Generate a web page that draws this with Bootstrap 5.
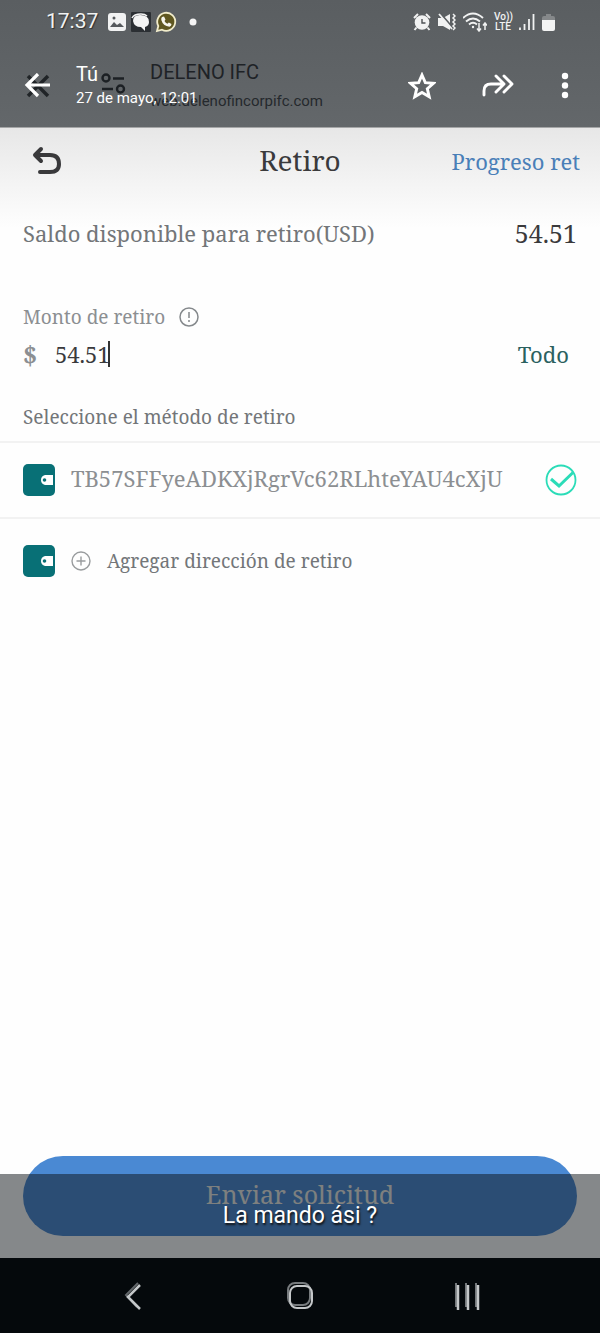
<!DOCTYPE html>
<html lang="es">
<head>
<meta charset="utf-8">
<meta name="viewport" content="width=device-width, initial-scale=1">
<title>Retiro</title>
<link rel="stylesheet" href="https://cdn.jsdelivr.net/npm/bootstrap@5.3.0/dist/css/bootstrap.min.css">
<style>
  body { font-family: "Noto Serif", "DejaVu Serif Condensed", "DejaVu Serif", serif; color: #3a3a3c; background: #fefefe; line-height: 1.4; }
  button { color: inherit; }
  svg { display: block; flex: none; }
  .plain { border: 0; background: none; padding: 0; }
  .viewer { font-family: Roboto, sans-serif; background: linear-gradient(#5a5e61, #63676a); color: #fff; border-bottom: 1px solid #a5a6a7; height: 128px; }
  .status { height: 44px; padding: 0 45px 0 46px; color: #f1f2f2; }
  .status-icons { gap: 7px; }
  .clock { font-size: 21px; width: 53px; text-shadow: 1px 1px 1px #2d3033; }
  .volte { font-size: 10px; line-height: 10px; width: 18px; font-weight: 500; }
  .titlebar { height: 83px; padding: 0 20px 0 24px; }
  .from { font-size: 20px; line-height: 24px; }
  .when { font-size: 15px; line-height: 24px; }
  .site { left: 101px; top: 60px; color: #1e2226; font-size: 20px; line-height: 24px; }
  .site svg { margin-top: 12px; }
  .site a { color: #25292d; font-size: 15px; line-height: 34px; display: block; text-decoration: none; }
  .forward { margin: 0 36px 0 46px; }
  .app { background: linear-gradient(#e7e7e7, #fefefe 100px); }
  .toolbar { height: 66px; padding: 0 20px; }
  .back { margin-left: 12px; }
  .pagetitle { font-size: 28px; }
  .t-lg { font-size: 25px; }
  .t-md { font-size: 22px; }
  .t-sm { font-size: 19px; }
  .progress-link { color: #4a7fb8; text-decoration: none; }
  .ink-gray { color: #737679; }
  .ink-light { color: #8c8f92; }
  .ink-teal { color: #2b615f; }
  .gutter { padding-left: 23px; padding-right: 23px; }
  .balance { height: 78px; }
  .amount-label { margin-top: 31px; height: 28px; gap: 14px; }
  .amount { height: 46px; }
  .amount input { width: 55px; border: 0; border-right: 2px solid #333; padding: 0; outline: 0; background: none; color: #3a3a3c; height: 26px; }
  .currency { width: 32px; }
  .choose { height: 48px; margin-top: 16px; }
  .method { height: 76px; border-top: 2px solid #f2f2f2; }
  .method-add { height: 86px; }
  .address { padding-bottom: 4px; }
  .check { appearance: none; margin: 0; width: 32px; height: 32px; flex: none;
    background: url("data:image/svg+xml,%3Csvg xmlns='http://www.w3.org/2000/svg' viewBox='0 0 32 32' fill='none' stroke='%232bdcb8'%3E%3Ccircle cx='16' cy='16' r='14.5' stroke-width='1.8'/%3E%3Cpath d='M6 15l8 7L28 8.500' stroke-width='3'/%3E%3C/svg%3E"); }
  .send-area { padding-bottom: 22px; }
  .send { height: 80px; border-radius: 40px; background: #4a89d3; color: #f0efe8; padding-bottom: 4px; }
  .caption { height: 84px; background: rgba(12, 18, 22, .5); color: #fff; font: 23px/84px Roboto, sans-serif; text-shadow: 1px 2px 2px #111; bottom: 0; }
  .keys { height: 75px; background: #05090c; padding: 0 50px; }
</style>
</head>
<body>
<div class="d-flex flex-column min-vh-100">
  <header class="viewer position-relative">
    <div class="status d-flex align-items-center">
      <span class="clock">17:37</span>
      <svg class="ms-2" width="20" height="20" viewBox="0 0 20 20"><rect x="1" y="1" width="18" height="18" rx="3" fill="#f1f2f2"/><path d="M3 15l4-5 3 3 3-2 4 4z" fill="#55595c"/><circle cx="7" cy="6" r="1.500" fill="#55595c"/></svg>
      <svg class="ms-1 me-1" width="20" height="20" viewBox="0 0 20 20"><rect width="20" height="20" rx="1" fill="#2b2f33"/><path d="M2 9q0-6 7-6 9 0 9 7 0 4-4 5v4l-4-4Q3 15 2 9z" fill="#f4f4f4"/><path d="M1 6q2-4 9-4 4 0 6 2" stroke="#f4f4f4" stroke-width="1.500" fill="none"/></svg>
      <svg width="22" height="22" viewBox="0 0 22 22"><path d="M2 20l1.300-5A9 9 0 1 1 7 18.700z" fill="#5f5720" stroke="#f1eccb" stroke-width="1.800"/><path d="M7 6l2-.5 1.500 3-1 1.500q1 2 3 2.800l1.300-1.300 2.700 1.500q0 2-2 2.800Q8 15 6.300 9q-.3-2 .7-3z" fill="#f6f5ec"/></svg>
      <svg class="ms-2" width="16" height="8" viewBox="0 0 16 8"><circle cx="8" cy="4" r="3.500" fill="#f4f4f4"/></svg>
      <div class="status-icons ms-auto d-flex align-items-center">
        <svg width="18" height="18" viewBox="0 0 18 18" fill="#f1f2f2"><circle cx="9" cy="9.500" r="7.300"/><path d="M1 5l4-4M17 5l-4-4M3.500 14.500l-2 2.500M14.500 14.500l2 2.500" stroke="#f1f2f2" stroke-width="2"/><path d="M9 6v4h3.500" stroke="#4e5255" stroke-width="1.400" fill="none"/></svg>
        <svg width="18" height="18" viewBox="0 0 18 18" fill="none" stroke="#f1f2f2"><path d="M0 5h5l7-4v16l-7-4H0z" fill="#f1f2f2" stroke="none"/><path d="M2 0l12 14" stroke="#5a5e61" stroke-width="2"/><path d="M1 1l13 15" stroke-width="1.800"/><path d="M15 1l2 2-2 2 2 2-2 2 2 2-2 2 2 2-2 2" stroke-width="1.500"/></svg>
        <svg width="24" height="20" viewBox="0 0 24 20" fill="none" stroke="#f1f2f2" stroke-width="1.900"><path d="M0 6Q10-3 20 6M3 9.500q7-6 14 0M6 12.500q4-3.500 8 0"/><circle cx="10" cy="15" r="1.200" fill="#f1f2f2" stroke="none"/><path d="M16 11v8m-2-2.500l2 2.500 2-2.500M22 18v-7m-2 2.500l2-2.500 2 2.500" stroke-width="1.500"/></svg>
        <span class="volte text-center">Vo))<br>LTE</span>
        <svg width="16" height="18" viewBox="0 0 16 18" stroke="#f1f2f2" stroke-width="1.800"><path d="M1 14.500V17M5.500 11v6M10 6v11M14.500 1v16"/></svg>
        <svg width="13" height="17" viewBox="0 0 13 17"><path d="M0 4q0-2 2-2h2V0h5v2h2q2 0 2 2v4H0z" fill="#85888a"/><path d="M0 6h13v9q0 2-2 2H2q-2 0-2-2z" fill="#f3f4f4"/></svg>
      </div>
    </div>
    <div class="site position-absolute d-flex">
      <svg width="25" height="24" viewBox="0 0 25 24" fill="none" stroke="#1c2024" stroke-width="2.400"><circle cx="5" cy="6" r="3.500"/><path d="M12 6.500h11M1 17h11"/><circle cx="19.500" cy="17" r="3.500"/></svg>
      <div class="ps-4"><span>DELENO IFC</span><a href="#">web.delenofincorpifc.com</a></div>
    </div>
    <div class="titlebar d-flex align-items-center position-relative">
      <button class="plain" type="button" aria-label="Atrás"><svg width="28" height="26" viewBox="0 0 28 26" fill="none"><path d="M4 3l20 20M24 3L4 23" stroke="#202427" stroke-width="3.500"/><path d="M26 12H4M14 1L3 12l11 11" stroke="#fff" stroke-width="3.200"/></svg></button>
      <div class="ms-4"><div class="from">Tú</div><div class="when">27 de mayo, 12:01</div></div>
      <button class="plain ms-auto" type="button" aria-label="Destacar"><svg width="28" height="28" viewBox="0 0 28 28"><path d="M14 3l3.300 7.600 8.200.7-6.200 5.400 1.900 8.100L14 20.500l-7.200 4.300 1.900-8.100-6.200-5.400 8.200-.7z" fill="none" stroke="#fff" stroke-width="2.900"/></svg></button>
      <button class="plain forward" type="button" aria-label="Reenviar"><svg width="32" height="26" viewBox="0 0 32 26" fill="none" stroke="#fff" stroke-width="2.900" stroke-linecap="round" stroke-linejoin="round"><path d="M2 22v-4q0-7 7-7h12M14 3l8 8-8 8M22 3l8 8-8 8"/></svg></button>
      <button class="plain" type="button" aria-label="Más opciones"><svg width="30" height="28" viewBox="0 0 30 28" fill="#fff"><circle cx="15" cy="4" r="3.200"/><circle cx="15" cy="13.500" r="3.200"/><circle cx="15" cy="23" r="3.200"/></svg></button>
    </div>
  </header>

  <main class="app flex-grow-1 d-flex flex-column position-relative">
    <div class="toolbar row g-0 align-items-center">
      <div class="col"><button class="plain back d-block" type="button" aria-label="Volver"><svg width="30" height="30" viewBox="0 0 30 30" fill="none" stroke="#39393b" stroke-width="4" stroke-linecap="round" stroke-linejoin="round"><path d="M9 3L3 9l6 6M4 9h14q9 0 9 9 0 8-9 8H8"/></svg></button></div>
      <h1 class="pagetitle col-auto fw-normal m-0">Retiro</h1>
      <div class="col text-end text-nowrap"><a class="progress-link t-md" href="#">Progreso ret</a></div>
    </div>
    <div class="balance gutter d-flex align-items-center justify-content-between">
      <span class="t-md ink-gray">Saldo disponible para retiro(USD)</span>
      <span class="t-lg">54.51</span>
    </div>
    <div class="amount-label gutter d-flex align-items-center ink-light">
      <label class="t-sm" for="amount">Monto de retiro</label>
      <svg width="20" height="20" viewBox="0 0 20 20" fill="none" stroke="#85898c" stroke-width="1.500"><circle cx="10" cy="10" r="9"/><path d="M10 5v6M10 13v2"/></svg>
    </div>
    <div class="amount gutter d-flex align-items-center">
      <span class="currency t-lg ink-light fw-bold">$</span>
      <input class="t-md" id="amount" type="text" inputmode="decimal" value="54.51">
      <button class="plain t-md ink-teal ms-auto me-2" type="button">Todo</button>
    </div>
    <h2 class="choose gutter d-flex align-items-center t-sm fw-normal ink-gray mb-0">Seleccione el método de retiro</h2>
    <label class="method gutter d-flex align-items-center">
      <svg width="32" height="32" viewBox="0 0 32 32"><rect width="32" height="32" rx="5" fill="#087076"/><path d="M30 11v10h-8q-4-1-4-5t4-5z" fill="#fff"/><circle cx="21.500" cy="16" r="1.800" fill="#087076"/></svg>
      <span class="address t-md ink-light ms-3">TB57SFFyeADKXjRgrVc62RLhteYAU4cXjU</span>
      <input class="check ms-auto" type="radio" name="method" checked>
    </label>
    <button class="method method-add plain gutter d-flex align-items-center text-start" type="button">
      <svg width="32" height="32" viewBox="0 0 32 32"><rect width="32" height="32" rx="5" fill="#087076"/><path d="M30 11v10h-8q-4-1-4-5t4-5z" fill="#fff"/><circle cx="21.500" cy="16" r="1.800" fill="#087076"/></svg>
      <svg class="ms-3" width="20" height="20" viewBox="0 0 20 20" fill="none" stroke="#999c9e" stroke-width="1.400"><circle cx="10" cy="10" r="9"/><path d="M10 5.500v9M5.500 10h9"/></svg>
      <span class="t-sm ink-gray ms-3">Agregar dirección de retiro</span>
    </button>
    <div class="send-area gutter mt-auto"><button class="send plain t-lg w-100 d-block" type="button">Enviar solicitud</button></div>
    <div class="caption position-absolute w-100 text-center">La mando ási ?</div>
  </main>

  <nav class="keys d-flex align-items-center" aria-label="Sistema">
    <button class="plain col" type="button" aria-label="Atrás"><svg class="mx-auto" width="20" height="32" viewBox="0 0 20 32" fill="none" stroke-width="2"><path d="M15 3L3 15l11 12" stroke="#62666a"/><path d="M17 5L5 17l12 12" stroke="#c4c7c9" stroke-width="2.500"/></svg></button>
    <button class="plain col" type="button" aria-label="Inicio"><svg class="mx-auto" width="28" height="30" viewBox="0 0 28 30" fill="none" stroke-width="2"><rect x="2" y="2" width="22" height="22" rx="7" stroke="#777b7e"/><rect x="4" y="5" width="22" height="22" rx="7" stroke="#c4c7c9"/></svg></button>
    <button class="plain col" type="button" aria-label="Recientes"><svg class="mx-auto" width="26" height="30" viewBox="0 0 26 30" stroke-width="2"><path d="M2 2v24M12 2v24M22 2v24" stroke="#74787b"/><path d="M4 4v25M14 4v25M24 4v25" stroke="#c4c7c9" stroke-width="2.500"/></svg></button>
  </nav>
</div>
<script src="https://cdn.jsdelivr.net/npm/bootstrap@5.3.0/dist/js/bootstrap.bundle.min.js"></script>
</body>
</html>
